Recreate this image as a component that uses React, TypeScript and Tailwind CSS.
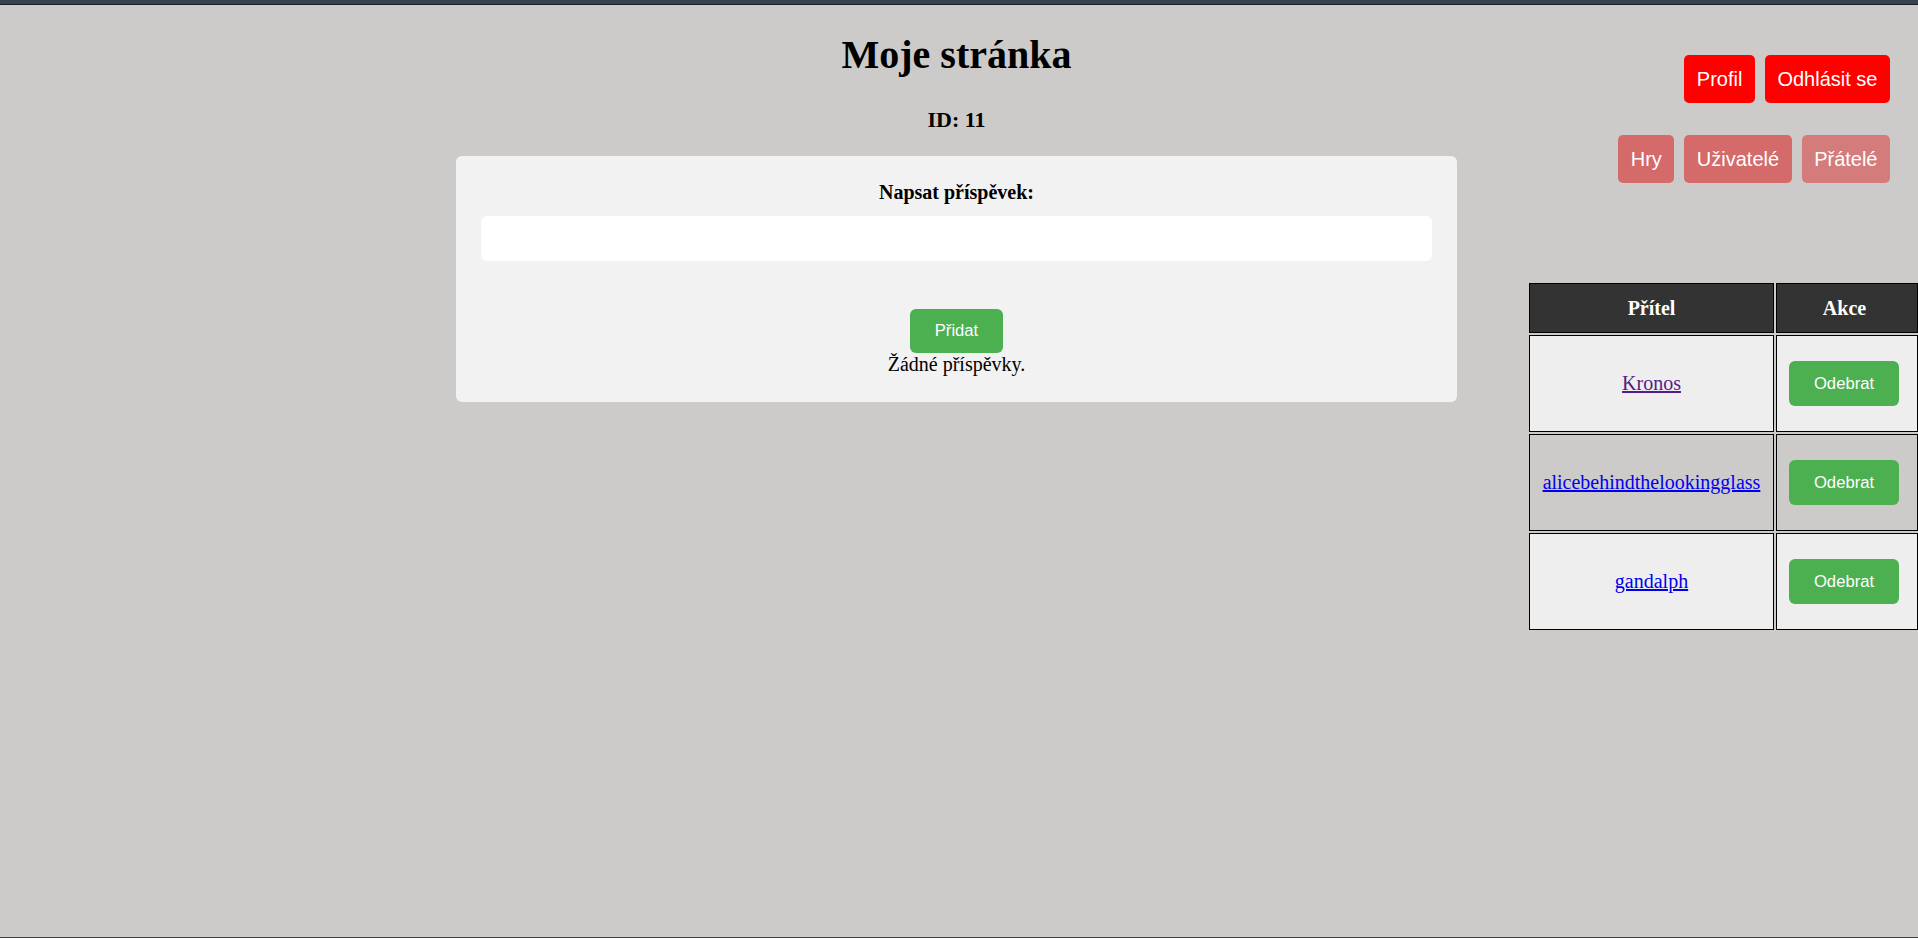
import React from "react";

const serif = { fontFamily: '"Liberation Serif", "Times New Roman", serif' };
const sans = '[font-family:"Liberation_Sans",Arial,sans-serif]';

function NavButton({ label, color }: { label: string; color: string }) {
  return (
    <button
      className={`h-[48px] px-[12.5px] rounded-[5px] text-white text-[20px] leading-[23px] flex items-center justify-center ${color} [font-family:"Liberation_Sans",Arial,sans-serif]`}
    >
      {label}
    </button>
  );
}

function FriendRow({ name, href, visited, bg }: { name: string; href: string; visited?: boolean; bg: string }) {
  return (
    <>
      <div className={`h-[97px] border border-black ${bg} flex items-center justify-center`}>
        <a
          href={href}
          className={`text-[20px] leading-[23px] underline ${visited ? "text-[#551a8b]" : "text-[#0000ee]"}`}
          style={serif}
        >
          {name}
        </a>
      </div>
      <div className={`h-[97px] border border-black ${bg} flex items-center`}>
        <button className="ml-[12px] h-[45px] w-[110px] rounded-[6px] bg-[#4caf50] text-white text-[16.67px] leading-[19px] [font-family:'Liberation_Sans',Arial,sans-serif]">
          Odebrat
        </button>
      </div>
    </>
  );
}

export default function App() {
  return (
    <div className="w-full h-[938px] overflow-hidden flex flex-col bg-[#cccbc9] text-black" style={serif}>
      <div className="h-[4px] bg-[#37424e]" />
      <div className="h-[1px] bg-[#1b2026]" />
      <div className="flex-1 grid grid-cols-[456px_1001px_1fr]">
        <div />
        <div className="flex flex-col">
          <h1 className="mt-[26.5px] text-center text-[40px] leading-[46px] font-bold">Moje stránka</h1>
          <div className="mt-[29px] text-center text-[22px] leading-[26px] font-bold">ID: 11</div>
          <div className="mt-[23.4px] bg-[#f2f2f2] rounded-[6px] px-[25px] pt-[25px] pb-[26px] flex flex-col items-center">
            <div className="text-[20px] leading-[23px] font-bold">Napsat příspěvek:</div>
            <div className="mt-[12px] w-full h-[45px] bg-white rounded-[6px]" />
            <button className="mt-[48px] h-[44px] px-[25px] rounded-[6px] bg-[#4caf50] text-white text-[16.67px] leading-[19px] [font-family:'Liberation_Sans',Arial,sans-serif]">
              Přidat
            </button>
            <div className="text-[20px] leading-[23px]">Žádné příspěvky.</div>
          </div>
        </div>
        <div className="flex flex-col">
          <div className="mt-[50px] pr-[28px] flex justify-end gap-[10px]">
            <NavButton label="Profil" color="bg-[#ff0000]" />
            <NavButton label="Odhlásit se" color="bg-[#ff0000]" />
          </div>
          <div className="mt-[32px] pr-[28px] flex justify-end gap-[10px]">
            <NavButton label="Hry" color="bg-[#d46a6a]" />
            <NavButton label="Uživatelé" color="bg-[#d46a6a]" />
            <NavButton label="Přátelé" color="bg-[#d47c7c]" />
          </div>
          <div className="mt-[100px] ml-[72px] w-[389px] grid grid-cols-[245px_142px] gap-[2px]">
            <div className="h-[50px] border border-black bg-[#333333] text-white flex items-center justify-center text-[20px] leading-[23px] font-bold">
              Přítel
            </div>
            <div className="h-[50px] border border-black bg-[#333333] text-white flex items-center justify-center pr-[5px] text-[20px] leading-[23px] font-bold">
              Akce
            </div>
            <FriendRow name="Kronos" href="#kronos" visited bg="bg-[#eeeeee]" />
            <FriendRow name="alicebehindthelookingglass" href="#alice" bg="bg-[#cccbc9]" />
            <FriendRow name="gandalph" href="#gandalph" bg="bg-[#eeeeee]" />
          </div>
        </div>
      </div>
      <div className="h-[1px] bg-[#404040]" />
    </div>
  );
}
